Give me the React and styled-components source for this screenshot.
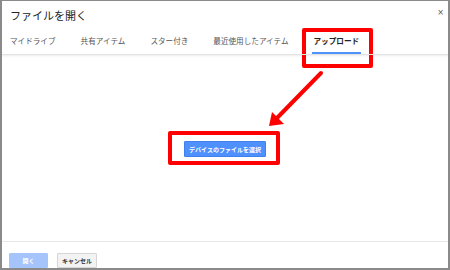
import React from "react";
import styled, { createGlobalStyle } from "styled-components";

const Global = createGlobalStyle`
  html, body { margin: 0; padding: 0; background: #fff; }
  body { font-family: "Noto Sans CJK JP", "Noto Sans", sans-serif; }
`;

const Frame = styled.div`
  position: relative;
  width: 450px;
  height: 270px;
  box-sizing: border-box;
  border-style: solid;
  border-color: #8a8a8a;
  border-width: 1px 2px 2px 2px;
  background: #fff;
  display: flex;
  flex-direction: column;
  overflow: hidden;
`;

const Header = styled.div`
  height: 26px;
  display: flex;
  align-items: center;
  justify-content: space-between;
  padding: 0 4px 0 8px;
`;

const Title = styled.div`
  font-size: 11px;
  color: #222;
  line-height: 1;
  padding-top: 2px;
`;

const Close = styled.div`
  font-family: "DejaVu Sans", sans-serif;
  font-size: 8px;
  color: #555;
  padding-bottom: 4px;
`;

const Tabs = styled.div`
  height: 27px;
  display: flex;
  align-items: stretch;
  gap: 21px;
  padding-left: 6px;
  border-bottom: 1px solid #e3e3e3;
  box-shadow: 0 1px 2px rgba(0, 0, 0, 0.08);
  position: relative;
  z-index: 1;
`;

const Tab = styled.div`
  display: flex;
  align-items: center;
  padding: 3px 2px 0;
  font-size: 7.6px;
  line-height: 1;
  color: ${(p) => (p.$active ? "#222" : "#555")};
  font-weight: ${(p) => (p.$active ? 700 : 400)};
  border-bottom: 2px solid ${(p) => (p.$active ? "#4d90fe" : "transparent")};
`;

const Content = styled.div`
  flex: 1;
  display: flex;
  align-items: center;
  justify-content: center;
  padding-top: 2px;
`;

const PrimaryButton = styled.div`
  height: 16px;
  padding: 0 4px;
  display: flex;
  align-items: center;
  background: #4d90fe;
  border: 1px solid #3f80ea;
  box-sizing: border-box;
  border-radius: 1px;
  color: #fff;
  font-size: 6px;
  font-weight: 700;
  white-space: nowrap;
`;

const Footer = styled.div`
  border-top: 1px solid #e8e8e8;
  height: 27px;
  display: flex;
  align-items: flex-start;
  gap: 9px;
  padding: 11px 0 0 7px;
  box-sizing: border-box;
`;

const FooterButton = styled.div`
  width: ${(p) => p.$w}px;
  height: 15px;
  box-sizing: border-box;
  display: flex;
  align-items: center;
  justify-content: center;
  font-size: 6px;
  font-weight: 700;
  border-radius: 1px;
  background: ${(p) => (p.$primary ? "#a5c4fb" : "#f3f3f3")};
  border: 1px solid ${(p) => (p.$primary ? "#a5c4fb" : "#d6d6d6")};
  color: ${(p) => (p.$primary ? "#fff" : "#333")};
`;

const Highlight = styled.div`
  position: absolute;
  box-sizing: border-box;
  border: 4px solid #ff0000;
  border-radius: 2px;
  left: ${(p) => p.$x}px;
  top: ${(p) => p.$y}px;
  width: ${(p) => p.$w}px;
  height: ${(p) => p.$h}px;
  pointer-events: none;
`;

const Overlay = styled.svg`
  position: absolute;
  left: -2px;
  top: -1px;
  width: 450px;
  height: 270px;
  pointer-events: none;
`;

export default function App() {
  return (
    <>
      <Global />
      <Frame>
        <Header>
          <Title>ファイルを開く</Title>
          <Close>×</Close>
        </Header>
        <Tabs>
          <Tab>マイドライブ</Tab>
          <Tab>共有アイテム</Tab>
          <Tab>スター付き</Tab>
          <Tab>最近使用したアイテム</Tab>
          <Tab $active>アップロード</Tab>
        </Tabs>
        <Content>
          <PrimaryButton>デバイスのファイルを選択</PrimaryButton>
        </Content>
        <Footer>
          <FooterButton $primary $w={39}>開く</FooterButton>
          <FooterButton $w={40}>キャンセル</FooterButton>
        </Footer>
        <Highlight $x={300} $y={27} $w={71} $h={40} />
        <Highlight $x={166} $y={130} $w={112} $h={34} />
        <Overlay viewBox="0 0 450 270">
          <line x1="321" y1="73" x2="277" y2="118" stroke="#ff0000" strokeWidth="4" strokeLinecap="round" />
          <polygon points="269,126 272,112 284,124" fill="#ff0000" />
        </Overlay>
      </Frame>
    </>
  );
}
